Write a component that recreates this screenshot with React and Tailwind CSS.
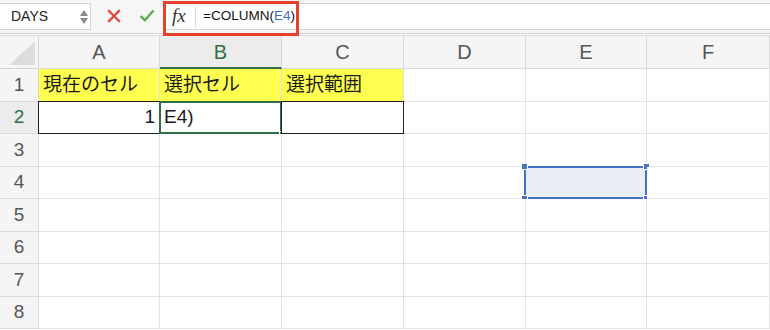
import React from 'react';

const cols = ['A', 'B', 'C', 'D', 'E', 'F'];
const rows = [1, 2, 3, 4, 5, 6, 7, 8];
const font = { fontFamily: '"Liberation Sans", "Noto Sans CJK JP", sans-serif' };

function Cell({ r, c }) {
  const key = `${c}${r}`;
  const yellow = r === 1 && ['A', 'B', 'C'].includes(c);
  const text = { A1: '現在のセル', B1: '選択セル', C1: '選択範囲', B2: 'E4)' }[key];

  return (
    <div className={`relative h-[32.5px] border-r border-b border-[#e2e2e2] ${yellow ? 'bg-[#ffff4f]' : 'bg-white'}`}>
      {text && (
        <span className="absolute left-[4px] top-0 h-full flex items-center text-[19px] text-[#1a1a1a]">{text}</span>
      )}
      {key === 'A2' && (
        <span className="absolute right-[4px] top-0 h-full flex items-center text-[19px] text-[#1a1a1a]">1</span>
      )}

      {/* black borders around A2 and C2 */}
      {(key === 'A2' || key === 'C2') && (
        <div className="absolute -left-px -top-px -right-px -bottom-px border border-[#1f1f1f]"></div>
      )}

      {/* active cell B2 */}
      {key === 'B2' && (
        <>
          <div className="absolute -left-[1px] -top-[1px] -right-[1px] -bottom-[1px] border-2 border-[#2f6f46]"></div>
          <div className="absolute -right-[3px] -bottom-[3px] w-[5px] h-[5px] bg-[#2f6f46] border border-white"></div>
        </>
      )}

      {/* reference highlight E4 */}
      {key === 'E4' && (
        <>
          <div className="absolute -left-[2px] -top-[1px] right-[-1px] -bottom-[1px] border-2 border-[#4472c4] bg-[#e9eef8]"></div>
          <div className="absolute -left-[5px] -top-[4px] w-[7px] h-[7px] bg-[#4472c4] border border-white"></div>
          <div className="absolute -right-[4px] -top-[4px] w-[7px] h-[7px] bg-[#4472c4] border border-white"></div>
          <div className="absolute -left-[5px] -bottom-[4px] w-[7px] h-[7px] bg-[#4472c4] border border-white"></div>
          <div className="absolute -right-[4px] -bottom-[4px] w-[7px] h-[7px] bg-[#4472c4] border border-white"></div>
        </>
      )}
    </div>
  );
}

export default function App() {
  return (
    <div className="w-[770px] h-[330px] overflow-hidden bg-white" style={font}>
      {/* Formula bar */}
      <div className="relative h-[34px] bg-[#f6f6f6] border-b border-[#cfcfcf] flex items-start">
        <div className="mt-[3px] w-[91px] h-[27px] bg-white border border-[#d3d3d3] border-l-0 flex items-center justify-between pl-[11px] pr-[2px]">
          <span className="text-[14px] text-[#222]">DAYS</span>
          <span className="flex flex-col items-center gap-[2px] text-[#8a8a8a]">
            <svg width="8" height="6" viewBox="0 0 8 6"><path d="M4 0 L8 6 L0 6 Z" fill="currentColor" /></svg>
            <svg width="8" height="6" viewBox="0 0 8 6"><path d="M0 0 L8 0 L4 6 Z" fill="currentColor" /></svg>
          </span>
        </div>

        <div className="h-[31px] flex items-center gap-[18px] pl-[16px] pr-[10px]">
          <svg width="14" height="14" viewBox="0 0 14 14">
            <path d="M2 2 L12 12 M12 2 L2 12" stroke="#dd4a43" strokeWidth="2.4" strokeLinecap="square" />
          </svg>
          <svg width="16" height="13" viewBox="0 0 16 13">
            <path d="M1.5 7 L5.8 11.2 L14.5 1.5" stroke="#5aae4e" strokeWidth="2.4" fill="none" />
          </svg>
        </div>

        <div className="flex-1 mt-[3px] h-[27px] bg-white border-y border-[#d6d6d6] flex items-center">
          <span className="w-[28px] pl-[7px] text-[19px] italic text-[#333]" style={{ fontFamily: '"Liberation Serif", serif' }}>fx</span>
          <span className="h-[20px] w-px bg-[#d6d6d6] ml-[2px]"></span>
          <span className="pl-[7px] text-[13.5px] text-[#111]">
            =COLUMN(<span className="text-[#3f6ec6]">E4</span>)
          </span>
        </div>

        {/* red annotation frame */}
        <div className="absolute left-[163px] top-[1px] w-[136px] h-[35px] border-[3px] border-[#e8402a]"></div>
      </div>

      {/* Sheet */}
      <div className="grid grid-cols-[39px_121px_122px_122px_122px_121px_1fr] mt-[1px] border-t border-[#d9d9d9]">
        {/* header row */}
        <div className="relative h-[33px] bg-[#f5f5f5] border-r border-b border-[#d4d4d4]">
          <svg className="absolute right-[3px] bottom-[3px]" width="26" height="24" viewBox="0 0 26 24">
            <path d="M26 0 L26 24 L0 24 Z" fill="#dcdcdc" />
          </svg>
        </div>
        {cols.map(c => (
          <div
            key={c}
            className={`h-[33px] flex items-center justify-center text-[20px] border-r ${
              c === 'B'
                ? 'bg-[#ececec] text-[#2f6f46] border-b-2 border-b-[#2f6f46] border-r-[#d9d9d9]'
                : 'bg-[#f5f5f5] text-[#555] border-b border-[#d9d9d9]'
            }`}
          >
            {c}
          </div>
        ))}

        {rows.map(r => (
          <React.Fragment key={r}>
            <div
              className={`h-[32.5px] flex items-center justify-center text-[19px] border-r border-b border-[#d9d9d9] ${
                r === 2 ? 'bg-[#ececec] text-[#2f6f46]' : 'bg-[#f5f5f5] text-[#555]'
              }`}
            >
              {r}
            </div>
            {cols.map(c => <Cell key={c} r={r} c={c} />)}
          </React.Fragment>
        ))}
      </div>
    </div>
  );
}
